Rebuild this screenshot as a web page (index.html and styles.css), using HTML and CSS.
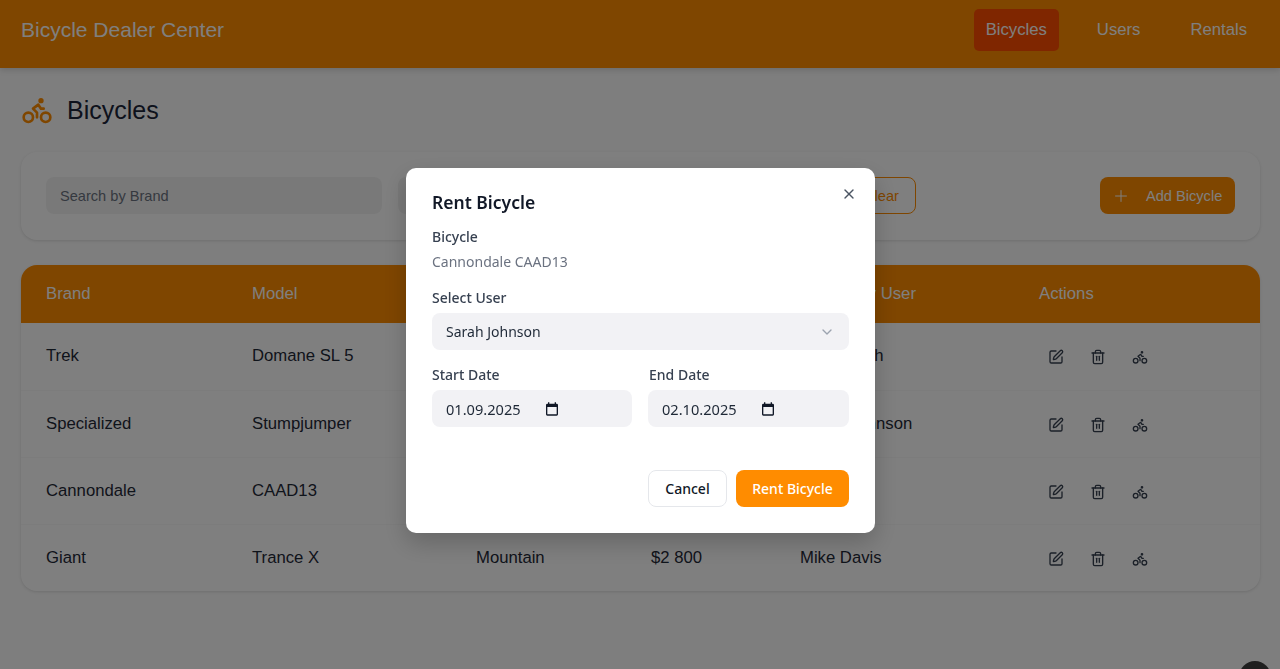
FILE: index.html
```html
<!DOCTYPE html>
<html lang="en">
<head>
    <meta charset="UTF-8">
    <meta name="viewport" content="width=device-width, initial-scale=1.0">
    <title>Bicycle Dealer Center</title>
    <link rel="stylesheet" href="styles.css">
</head>
<body>

    <header class="topbar">
        <div class="brand">Bicycle Dealer Center</div>
        <nav class="nav">
            <a class="nav-link active">Bicycles</a>
            <a class="nav-link">Users</a>
            <a class="nav-link">Rentals</a>
        </nav>
    </header>

    <main class="content">
        <div class="page-title">
            <svg class="title-icon" viewBox="0 0 24 24"><circle cx="18.5" cy="17.5" r="3.5"/><circle cx="5.5" cy="17.5" r="3.5"/><circle class="head" cx="15" cy="5" r="1"/><path d="M12 17.5V14l-3-3 4-3 2 3h2"/></svg>
            <h1>Bicycles</h1>
        </div>

        <section class="filters">
            <input class="filter-input" type="text" placeholder="Search by Brand">
            <input class="filter-input wide" type="text">
            <button class="btn-clear">Clear</button>
            <button class="btn-add">
                <svg class="plus" viewBox="0 0 24 24"><path d="M5 12h14"/><path d="M12 5v14"/></svg>
                Add Bicycle
            </button>
        </section>

        <section class="table-card">
            <table>
                <colgroup>
                    <col class="col-brand"><col class="col-model"><col class="col-type"><col class="col-price"><col class="col-user"><col>
                </colgroup>
                <thead>
                    <tr><th>Brand</th><th>Model</th><th></th><th></th><th>Rented by User</th><th>Actions</th></tr>
                </thead>
                <tbody>
                    <tr>
                        <td>Trek</td><td>Domane SL 5</td><td></td><td></td><td>John Smith</td>
                        <td class="actions">
                            <svg viewBox="0 0 24 24"><path d="M12 3H5a2 2 0 0 0-2 2v14a2 2 0 0 0 2 2h14a2 2 0 0 0 2-2v-7"/><path d="M18.4 2.6a1 1 0 0 1 3 3l-9 9a2 2 0 0 1-.9.5l-2.9.9a.5.5 0 0 1-.6-.6l.8-2.9a2 2 0 0 1 .5-.9z"/></svg>
                            <svg viewBox="0 0 24 24"><path d="M3 6h18"/><path d="M19 6v14a2 2 0 0 1-2 2H7a2 2 0 0 1-2-2V6"/><path d="M8 6V4a2 2 0 0 1 2-2h4a2 2 0 0 1 2 2v2"/><path d="M10 11v6"/><path d="M14 11v6"/></svg>
                            <svg viewBox="0 0 24 24"><circle cx="18.5" cy="17.5" r="3.5"/><circle cx="5.5" cy="17.5" r="3.5"/><circle cx="15" cy="5" r="1"/><path d="M12 17.5V14l-3-3 4-3 2 3h2"/></svg>
                        </td>
                    </tr>
                    <tr>
                        <td>Specialized</td><td>Stumpjumper</td><td></td><td></td><td>Sarah Johnson</td>
                        <td class="actions">
                            <svg viewBox="0 0 24 24"><path d="M12 3H5a2 2 0 0 0-2 2v14a2 2 0 0 0 2 2h14a2 2 0 0 0 2-2v-7"/><path d="M18.4 2.6a1 1 0 0 1 3 3l-9 9a2 2 0 0 1-.9.5l-2.9.9a.5.5 0 0 1-.6-.6l.8-2.9a2 2 0 0 1 .5-.9z"/></svg>
                            <svg viewBox="0 0 24 24"><path d="M3 6h18"/><path d="M19 6v14a2 2 0 0 1-2 2H7a2 2 0 0 1-2-2V6"/><path d="M8 6V4a2 2 0 0 1 2-2h4a2 2 0 0 1 2 2v2"/><path d="M10 11v6"/><path d="M14 11v6"/></svg>
                            <svg viewBox="0 0 24 24"><circle cx="18.5" cy="17.5" r="3.5"/><circle cx="5.5" cy="17.5" r="3.5"/><circle cx="15" cy="5" r="1"/><path d="M12 17.5V14l-3-3 4-3 2 3h2"/></svg>
                        </td>
                    </tr>
                    <tr>
                        <td>Cannondale</td><td>CAAD13</td><td></td><td></td><td></td>
                        <td class="actions">
                            <svg viewBox="0 0 24 24"><path d="M12 3H5a2 2 0 0 0-2 2v14a2 2 0 0 0 2 2h14a2 2 0 0 0 2-2v-7"/><path d="M18.4 2.6a1 1 0 0 1 3 3l-9 9a2 2 0 0 1-.9.5l-2.9.9a.5.5 0 0 1-.6-.6l.8-2.9a2 2 0 0 1 .5-.9z"/></svg>
                            <svg viewBox="0 0 24 24"><path d="M3 6h18"/><path d="M19 6v14a2 2 0 0 1-2 2H7a2 2 0 0 1-2-2V6"/><path d="M8 6V4a2 2 0 0 1 2-2h4a2 2 0 0 1 2 2v2"/><path d="M10 11v6"/><path d="M14 11v6"/></svg>
                            <svg viewBox="0 0 24 24"><circle cx="18.5" cy="17.5" r="3.5"/><circle cx="5.5" cy="17.5" r="3.5"/><circle cx="15" cy="5" r="1"/><path d="M12 17.5V14l-3-3 4-3 2 3h2"/></svg>
                        </td>
                    </tr>
                    <tr>
                        <td>Giant</td><td>Trance X</td><td>Mountain</td><td>$2 800</td><td>Mike Davis</td>
                        <td class="actions">
                            <svg viewBox="0 0 24 24"><path d="M12 3H5a2 2 0 0 0-2 2v14a2 2 0 0 0 2 2h14a2 2 0 0 0 2-2v-7"/><path d="M18.4 2.6a1 1 0 0 1 3 3l-9 9a2 2 0 0 1-.9.5l-2.9.9a.5.5 0 0 1-.6-.6l.8-2.9a2 2 0 0 1 .5-.9z"/></svg>
                            <svg viewBox="0 0 24 24"><path d="M3 6h18"/><path d="M19 6v14a2 2 0 0 1-2 2H7a2 2 0 0 1-2-2V6"/><path d="M8 6V4a2 2 0 0 1 2-2h4a2 2 0 0 1 2 2v2"/><path d="M10 11v6"/><path d="M14 11v6"/></svg>
                            <svg viewBox="0 0 24 24"><circle cx="18.5" cy="17.5" r="3.5"/><circle cx="5.5" cy="17.5" r="3.5"/><circle cx="15" cy="5" r="1"/><path d="M12 17.5V14l-3-3 4-3 2 3h2"/></svg>
                        </td>
                    </tr>
                </tbody>
            </table>
        </section>
    </main>

    <div class="overlay">
        <div class="modal">
            <button class="modal-close">
                <svg viewBox="0 0 24 24"><path d="M18 6 6 18"/><path d="m6 6 12 12"/></svg>
            </button>
            <h2>Rent Bicycle</h2>
            <div class="field-label">Bicycle</div>
            <div class="bike-name">Cannondale CAAD13</div>
            <div class="field-label user-label">Select User</div>
            <div class="field select-field">
                <span>Sarah Johnson</span>
                <svg class="chevron" viewBox="0 0 24 24"><path d="m6 9 6 6 6-6"/></svg>
            </div>
            <div class="date-row">
                <div>
                    <div class="field-label date-label">Start Date</div>
                    <div class="field date-field">
                        <span>01.09.2025</span>
                        <svg class="calendar" viewBox="0 0 24 24"><path d="M19 4h-1V2h-2v2H8V2H6v2H5a2 2 0 0 0-2 2v14a2 2 0 0 0 2 2h14a2 2 0 0 0 2-2V6a2 2 0 0 0-2-2zm0 16H5V9h14v11z"/></svg>
                    </div>
                </div>
                <div>
                    <div class="field-label date-label end-label">End Date</div>
                    <div class="field date-field">
                        <span>02.10.2025</span>
                        <svg class="calendar" viewBox="0 0 24 24"><path d="M19 4h-1V2h-2v2H8V2H6v2H5a2 2 0 0 0-2 2v14a2 2 0 0 0 2 2h14a2 2 0 0 0 2-2V6a2 2 0 0 0-2-2zm0 16H5V9h14v11z"/></svg>
                    </div>
                </div>
            </div>
            <div class="modal-footer">
                <button class="btn-cancel">Cancel</button>
                <button class="btn-rent">Rent Bicycle</button>
            </div>
        </div>
    </div>

    <div class="help-bubble"></div>

</body>
</html>
```

FILE: styles.css
```css
* {
    box-sizing: border-box;
}

html, body {
    height: 100%;
}

body {
    margin: 0;
    overflow: hidden;
    font-family: "Liberation Sans", Arial, sans-serif;
    background-color: #fcfcfc;
    color: #1f2937;
}

/* top bar */
.topbar {
    height: 68px;
    padding: 0 21px 8px;
    display: flex;
    align-items: center;
    justify-content: space-between;
    background-color: #ff8c00;
    box-shadow: 0 2px 6px rgba(0, 0, 0, 0.15);
}

.brand {
    font-size: 21px;
    color: white;
}

.nav {
    display: flex;
    gap: 26px;
}

.nav-link {
    padding: 0 12px;
    height: 42px;
    line-height: 42px;
    font-size: 16.7px;
    color: white;
    border-radius: 5px;
}

.nav-link.active {
    background-color: #ff4d00;
}

/* page */
.content {
    padding: 0 20px 0 21px;
}

.page-title {
    height: 84px;
    display: flex;
    align-items: center;
    gap: 14px;
}

.title-icon {
    width: 32px;
    height: 32px;
    fill: none;
    stroke: #ff8c00;
    stroke-width: 2;
    stroke-linecap: round;
    stroke-linejoin: round;
}

.title-icon .head {
    fill: #ff8c00;
}

h1 {
    margin: 0;
    font-size: 25px;
    font-weight: 400;
    color: #1a2438;
}

.filters {
    height: 88px;
    padding: 25px 25px 0;
    display: flex;
    align-items: flex-start;
    gap: 16px;
    background-color: white;
    border-radius: 16px;
    box-shadow: 0 1px 3px rgba(0, 0, 0, 0.12);
}

.filter-input {
    width: 336px;
    height: 37px;
    padding: 0 14px;
    font-family: inherit;
    font-size: 14.6px;
    border: 0;
    border-radius: 8px;
    background-color: #f3f3f3;
}

.filter-input.wide {
    width: 433px;
}

.filter-input::placeholder {
    color: #6b7280;
}

.btn-clear {
    width: 69px;
    height: 37px;
    padding: 0;
    font-family: inherit;
    font-size: 14.6px;
    color: #ff8c00;
    background: transparent;
    border: 1px solid #ff8c00;
    border-radius: 8px;
}

.btn-add {
    margin-left: auto;
    width: 135px;
    height: 37px;
    padding: 0 0 0 11px;
    display: flex;
    align-items: center;
    gap: 15px;
    font-family: inherit;
    font-size: 14.6px;
    color: white;
    background-color: #ff8c00;
    border: 0;
    border-radius: 8px;
}

.plus {
    width: 20px;
    height: 20px;
    flex-shrink: 0;
    fill: none;
    stroke: white;
    stroke-width: 1.2;
}

/* table */
.table-card {
    margin-top: 25px;
    background-color: white;
    border-radius: 16px;
    overflow: hidden;
    box-shadow: 0 1px 3px rgba(0, 0, 0, 0.12);
}

table {
    width: 100%;
    border-collapse: collapse;
    table-layout: fixed;
}

.col-brand { width: 206px; }
.col-model { width: 224px; }
.col-type { width: 175px; }
.col-price { width: 149px; }
.col-user { width: 239px; }

th {
    height: 58px;
    padding: 0 25px;
    text-align: left;
    font-size: 16.7px;
    font-weight: 400;
    color: white;
    background-color: #ff8c00;
    white-space: nowrap;
}

td {
    height: 67px;
    padding: 0 25px;
    font-size: 16.7px;
    color: #1f2937;
    border-bottom: 1px solid #f8f8f8;
}

tr:last-child td {
    border-bottom: 0;
}

.actions {
    padding-top: 2px;
    padding-left: 34px;
    font-size: 0;
    white-space: nowrap;
}

.actions svg {
    width: 16px;
    height: 16px;
    margin-right: 26px;
    vertical-align: middle;
    fill: none;
    stroke: #374151;
    stroke-width: 2;
    stroke-linecap: round;
    stroke-linejoin: round;
}

/* modal */
.overlay {
    position: fixed;
    inset: 0;
    background-color: rgba(0, 0, 0, 0.5);
}

.modal {
    position: absolute;
    left: 406px;
    top: 168px;
    width: 469px;
    height: 365px;
    padding: 21px 26px 26px;
    font-family: "Noto Sans", sans-serif;
    background-color: white;
    border-radius: 10px;
    box-shadow: 0 10px 25px rgba(0, 0, 0, 0.2);
}

.modal-close {
    position: absolute;
    top: 18px;
    right: 18px;
    width: 16px;
    height: 16px;
    padding: 0;
    border: 0;
    background: none;
}

.modal-close svg {
    display: block;
    width: 16px;
    height: 16px;
    fill: none;
    stroke: #4b5563;
    stroke-width: 2;
    stroke-linecap: round;
}

h2 {
    margin: 0;
    height: 27px;
    font-size: 17.5px;
    line-height: 27px;
    font-weight: 600;
    color: #111827;
}

.field-label {
    margin-top: 11px;
    height: 20px;
    font-size: 14px;
    line-height: 20px;
    font-weight: 500;
    color: #374151;
}

.bike-name {
    margin-top: 5px;
    height: 20px;
    font-size: 14px;
    line-height: 20px;
    color: #6b7280;
}

.field-label.user-label {
    margin-top: 16px;
}

.field {
    height: 37px;
    padding: 0 14px;
    display: flex;
    align-items: center;
    font-size: 14px;
    color: #1f2937;
    background-color: #f2f2f5;
    border-radius: 8px;
}

.user-label + .field {
    margin-top: 5px;
    justify-content: space-between;
}

.chevron {
    width: 16px;
    height: 16px;
    fill: none;
    stroke: #9ca3af;
    stroke-width: 2;
    stroke-linecap: round;
    stroke-linejoin: round;
}

.date-row {
    margin-top: 4px;
    display: grid;
    grid-template-columns: 200px 201px;
    gap: 16px;
}

.date-label {
    margin-bottom: 5px;
}

.end-label {
    padding-left: 1px;
}

.date-field span {
    width: 98px;
    font-size: 14.6px;
}

.calendar {
    width: 16px;
    height: 16px;
    fill: #111827;
}

.modal-footer {
    position: absolute;
    right: 26px;
    bottom: 26px;
    display: flex;
    gap: 9px;
}

.modal-footer button {
    height: 37px;
    padding: 0;
    font-family: inherit;
    font-size: 14px;
    font-weight: 500;
    border-radius: 8px;
}

.btn-cancel {
    width: 79px;
    color: #111827;
    background-color: white;
    border: 1px solid #e5e7eb;
}

.btn-rent {
    width: 113px;
    color: white;
    background-color: #ff8c00;
    border: 0;
}

.help-bubble {
    position: fixed;
    left: 1239px;
    top: 661px;
    width: 32px;
    height: 32px;
    border-radius: 50%;
    background-color: #1f1f1f;
}
```
